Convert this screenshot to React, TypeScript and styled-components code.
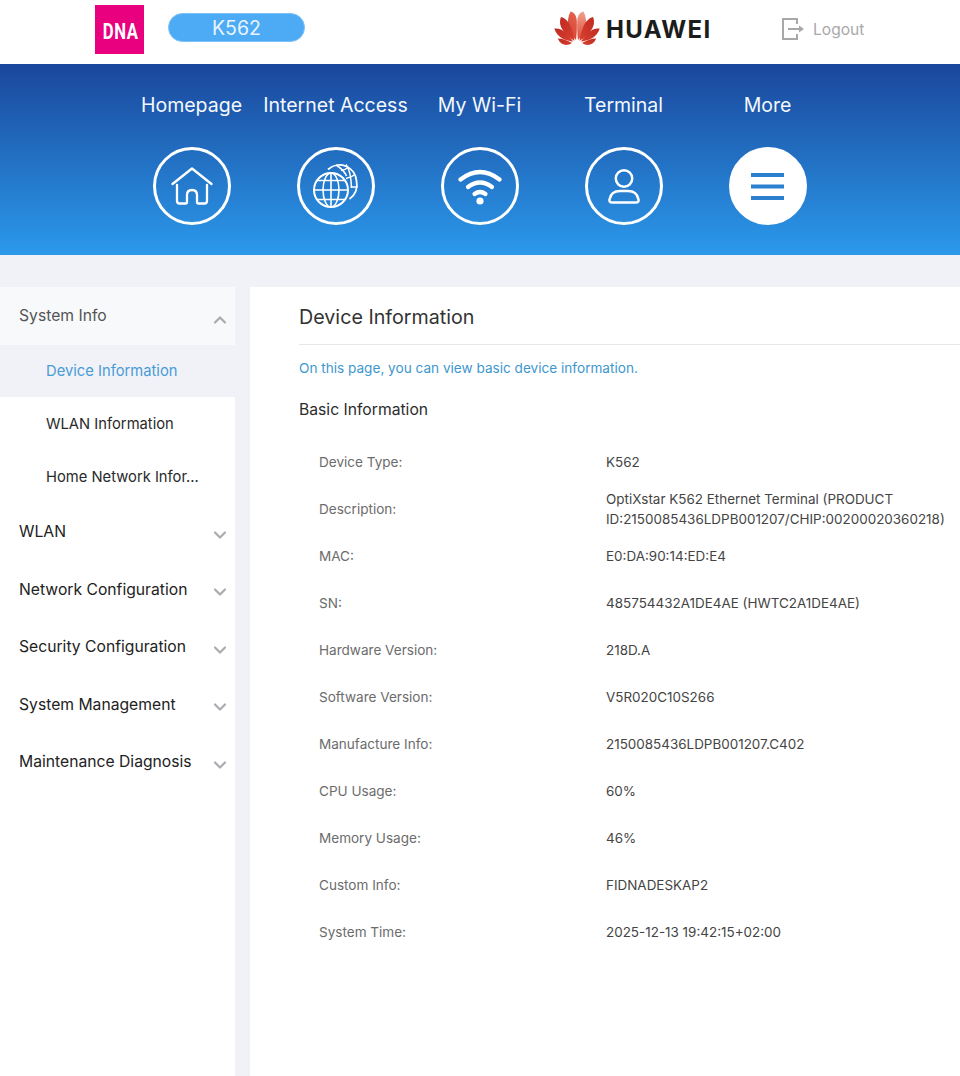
import React from "react";
import styled, { createGlobalStyle } from "styled-components";

const Global = createGlobalStyle`
  html, body { margin: 0; padding: 0; background: #f0f2f7; }
  body { font-family: Inter, "Noto Sans", "Liberation Sans", sans-serif; }
  * { box-sizing: border-box; }
`;

const Page = styled.div`
  width: 960px;
  height: 1076px;
  overflow: hidden;
  display: flex;
  flex-direction: column;
`;

const TopBar = styled.header`
  height: 64px;
  background: #fff;
  display: flex;
  align-items: flex-start;
  padding: 5px 0 0 95px;
  flex: none;
`;

const DnaLogo = styled.div`
  width: 49px;
  height: 49px;
  background: #e8007f;
  display: flex;
  align-items: center;
  justify-content: center;
  padding-top: 3px;
  padding-left: 2px;
`;

const DnaText = styled.span`
  display: block;
  color: #fff;
  font: 700 22px Roboto, "Liberation Sans", sans-serif;
  letter-spacing: 0.8px;
  transform: scaleX(0.76);
`;

const DevicePill = styled.div`
  width: 137px;
  height: 29px;
  margin: 8px 0 0 24px;
  border-radius: 15px;
  background: #4dabf5;
  border: 1px solid #7cc1f7;
  color: #e8f4fe;
  font-size: 19.5px;
  display: flex;
  align-items: center;
  justify-content: center;
`;

const Brand = styled.div`
  margin: 5px 0 0 249px;
  width: 160px;
  height: 38px;
  display: flex;
  align-items: center;
  gap: 6px;
`;

const BrandName = styled.span`
  font: 700 24px Inter, "Liberation Sans", sans-serif;
  color: #1c1c1c;
  letter-spacing: 1.35px;
`;

const LogoutBox = styled.div`
  display: flex;
  align-items: center;
  gap: 9px;
  margin: 12px 0 0 68px;
  height: 24px;
  color: #a9a9a9;
  font-size: 15.6px;
`;

const Banner = styled.nav`
  height: 191px;
  flex: none;
  background: linear-gradient(180deg, #1a479c 0%, #2b99ea 100%);
  display: flex;
  padding: 29px 0 0 119.5px;
`;

const NavItem = styled.div`
  width: 144px;
  display: flex;
  flex-direction: column;
  align-items: center;
  color: #f4f8fd;
  font-size: 19.5px;
`;

const NavLabel = styled.div`
  height: 24px;
  line-height: 24px;
  white-space: nowrap;
`;

const NavCircle = styled.div<{ $active?: boolean }>`
  width: 78px;
  height: 78px;
  margin-top: 30px;
  border-radius: 50%;
  border: 3px solid #fff;
  background: ${(p) => (p.$active ? "#fff" : "transparent")};
  display: flex;
  align-items: center;
  justify-content: center;
`;

const Body = styled.div`
  flex: 1;
  display: flex;
  padding-top: 32px;
  gap: 15px;
  min-height: 0;
`;

const Side = styled.aside`
  width: 235px;
  flex: none;
  background: #fff;
`;

const GroupHead = styled.div<{ $open?: boolean }>`
  height: ${(p) => (p.$open ? "58px" : "57.5px")};
  display: flex;
  align-items: center;
  justify-content: space-between;
  padding: 0 8px ${(p) => (p.$open ? "2px" : "0")} 19px;
  font-size: 15.7px;
  color: ${(p) => (p.$open ? "#555" : "#222")};
  background: ${(p) => (p.$open ? "#f8f9fb" : "#fff")};
`;

const SubItem = styled.div<{ $active?: boolean }>`
  height: ${(p) => (p.$active ? "52px" : "53px")};
  display: flex;
  align-items: center;
  padding-left: 46px;
  padding-bottom: ${(p) => (p.$active ? "1px" : "0")};
  font-size: 14.75px;
  color: ${(p) => (p.$active ? "#4a9bd6" : "#2a2a2a")};
  background: ${(p) => (p.$active ? "#f0f2f7" : "#fff")};
`;

const Main = styled.main`
  flex: 1;
  background: #fff;
  padding-left: 49px;
`;

const MainTitle = styled.h1`
  margin: 0;
  height: 58px;
  padding-top: 3px;
  display: flex;
  align-items: center;
  border-bottom: 1px solid #e4e6ea;
  font-size: 19.7px;
  font-weight: 400;
  color: #333;
`;

const Hint = styled.p`
  margin: 14px 0 0;
  font-size: 13.6px;
  line-height: 18px;
  color: #3d97cf;
`;

const SectionTitle = styled.h2`
  margin: 23px 0 0;
  font-size: 15.7px;
  line-height: 20px;
  font-weight: 400;
  color: #2c2c2c;
`;

const Rows = styled.div`
  margin-top: 18px;
  padding-left: 20px;
`;

const Row = styled.div`
  height: 47px;
  display: flex;
  align-items: center;
  line-height: 20px;
`;

const Key = styled.div`
  width: 287px;
  flex: none;
  font-size: 13.55px;
  color: #6c6c6c;
`;

const Val = styled.div`
  font-size: 13.45px;
  color: #444;
  white-space: pre-line;
`;

const Chevron = ({ up }: { up?: boolean }) => (
  <svg width="14" height="14" viewBox="0 0 14 14" fill="none" style={{ marginTop: up ? 9 : 6 }}>
    <path
      d={up ? "M2 9.5 L7 4.5 L12 9.5" : "M2 4.5 L7 9.5 L12 4.5"}
      stroke="#a9abae"
      strokeWidth="2.2"
      strokeLinecap="round"
      strokeLinejoin="round"
    />
  </svg>
);

const petalPaths = [
  "M22 29 C15 22 11 11 16.5 0.5 C20 1.5 22.5 4 22.8 10 C23 16 22.8 23 22 29 Z",
  "M20.5 30 C12 24 3 16 7 6 C11 7 14 10 16 14 C18 19 20 25 20.5 30 Z",
  "M19 30.5 C13 30 3 27 0.3 17.5 C5 17 9 19 12 22 C15 25 17.5 28 19 30.5 Z",
  "M18 32 C13 35.5 7 34.5 3.8 27.5 C8.5 27.5 13.5 29.5 18 32 Z",
];

const Petals = () => (
  <svg width="46" height="36" viewBox="0 0 46 36">
    <defs>
      <linearGradient id="petA" x1="0" y1="1" x2="0.3" y2="0">
        <stop offset="0" stopColor="#d63c2d" />
        <stop offset="1" stopColor="#e2604c" />
      </linearGradient>
      <linearGradient id="petR" x1="0" y1="1" x2="0" y2="0">
        <stop offset="0" stopColor="#dd4b39" />
        <stop offset="1" stopColor="#f0a08c" />
      </linearGradient>
      <linearGradient id="petB" x1="1" y1="1" x2="0" y2="0">
        <stop offset="0" stopColor="#d8402f" />
        <stop offset="1" stopColor="#bf2a22" />
      </linearGradient>
    </defs>
    {petalPaths.map((d, i) => (
      <path key={`l${i}`} d={d} fill={i === 0 ? "url(#petA)" : "url(#petB)"} />
    ))}
    <g transform="translate(46 0) scale(-1 1)">
      {petalPaths.map((d, i) => (
        <path key={`r${i}`} d={d} fill={i === 0 ? "url(#petR)" : "url(#petB)"} />
      ))}
    </g>
  </svg>
);

const LogoutIcon = () => (
  <svg width="22" height="22" viewBox="0 0 22 22" fill="none" stroke="#a8a8a8" strokeWidth="2">
    <path d="M15 6 V1 H1 V21 H15 V16" />
    <path d="M6 11 H18" />
    <path d="M17 7.5 L22 11 L17 14.5 Z" fill="#a8a8a8" stroke="none" />
  </svg>
);

const HomeIcon = () => (
  <svg width="42" height="38" viewBox="0 0 42 38" fill="none" stroke="#fff" strokeWidth="2.3" strokeLinecap="round" strokeLinejoin="round">
    <path d="M1.5 17 L21 1.5 L40.5 17" />
    <path d="M6 18 V34 Q6 36.5 8.5 36.5 H14.5 Q16 36.5 16 35 V28 Q16 23 21 23 Q26 23 26 28 V35 Q26 36.5 27.5 36.5 H33.5 Q36 36.5 36 34 V18" />
  </svg>
);

const GlobeIcon = () => (
  <svg width="46" height="46" viewBox="0 0 46 46" fill="none" stroke="#fff" strokeWidth="1.5">
    <path d="M15 6.5 A17 17 0 0 1 43.5 18 A17 17 0 0 1 36.5 36" strokeWidth="1.8" />
    <path d="M23 2 Q31 7 33.5 13 M33 1.5 Q38 8 38.5 25 M36 4 Q33 6.5 28 7.5 M42 11.5 Q39 14 33 15.5 M44.5 24 H37.5" />
    <circle cx="18" cy="27" r="17" strokeWidth="2" />
    <ellipse cx="18" cy="27" rx="8" ry="17" strokeWidth="1.6" />
    <path d="M18 10 V44 M1 27 H35 M4 17.5 H32 M4 36.5 H32" strokeWidth="1.6" />
  </svg>
);

const WifiIcon = () => (
  <svg width="44" height="37" viewBox="0 0 44 37" fill="none" stroke="#fff" strokeWidth="4.2" strokeLinecap="round">
    <path d="M2.5 11.5 Q22 -3.5 41.5 11.5" />
    <path d="M10 19 Q22 10 34 19" />
    <path d="M16.5 26 Q22 22 27.5 26" />
    <circle cx="22" cy="33" r="3.6" fill="#fff" stroke="none" />
  </svg>
);

const UserIcon = () => (
  <svg width="32" height="35" viewBox="0 0 32 35" fill="none" stroke="#fff" strokeWidth="2.5">
    <circle cx="16" cy="9.5" r="8.2" />
    <path d="M4 33.5 H28 Q31 33.5 30.5 30.5 Q29 22 20 22 H12 Q3 22 1.5 30.5 Q1 33.5 4 33.5 Z" strokeLinejoin="round" />
  </svg>
);

const MenuIcon = () => (
  <svg width="33" height="27" viewBox="0 0 33 27" fill="#2a80cf">
    <rect y="0" width="33" height="4" />
    <rect y="11.5" width="33" height="4" />
    <rect y="23" width="33" height="4" />
  </svg>
);

const navItems = [
  { label: "Homepage", icon: <HomeIcon /> },
  { label: "Internet Access", icon: <GlobeIcon /> },
  { label: "My Wi-Fi", icon: <WifiIcon /> },
  { label: "Terminal", icon: <UserIcon /> },
  { label: "More", icon: <MenuIcon />, active: true },
];

const closedGroups = ["WLAN", "Network Configuration", "Security Configuration", "System Management", "Maintenance Diagnosis"];

const rows: [string, string][] = [
  ["Device Type:", "K562"],
  ["Description:", "OptiXstar K562 Ethernet Terminal (PRODUCT\nID:2150085436LDPB001207/CHIP:00200020360218)"],
  ["MAC:", "E0:DA:90:14:ED:E4"],
  ["SN:", "485754432A1DE4AE (HWTC2A1DE4AE)"],
  ["Hardware Version:", "218D.A"],
  ["Software Version:", "V5R020C10S266"],
  ["Manufacture Info:", "2150085436LDPB001207.C402"],
  ["CPU Usage:", "60%"],
  ["Memory Usage:", "46%"],
  ["Custom Info:", "FIDNADESKAP2"],
  ["System Time:", "2025-12-13 19:42:15+02:00"],
];

export default function App() {
  return (
    <Page>
      <Global />
      <TopBar>
        <DnaLogo>
          <DnaText>DNA</DnaText>
        </DnaLogo>
        <DevicePill>K562</DevicePill>
        <Brand>
          <Petals />
          <BrandName>HUAWEI</BrandName>
        </Brand>
        <LogoutBox>
          <LogoutIcon />
          Logout
        </LogoutBox>
      </TopBar>
      <Banner>
        {navItems.map((n) => (
          <NavItem key={n.label}>
            <NavLabel>{n.label}</NavLabel>
            <NavCircle $active={n.active}>{n.icon}</NavCircle>
          </NavItem>
        ))}
      </Banner>
      <Body>
        <Side>
          <GroupHead $open>
            System Info
            <Chevron up />
          </GroupHead>
          <SubItem $active>Device Information</SubItem>
          <SubItem>WLAN Information</SubItem>
          <SubItem>Home Network Infor...</SubItem>
          {closedGroups.map((g) => (
            <GroupHead key={g}>
              {g}
              <Chevron />
            </GroupHead>
          ))}
        </Side>
        <Main>
          <MainTitle>Device Information</MainTitle>
          <Hint>On this page, you can view basic device information.</Hint>
          <SectionTitle>Basic Information</SectionTitle>
          <Rows>
            {rows.map(([k, v]) => (
              <Row key={k}>
                <Key>{k}</Key>
                <Val>{v}</Val>
              </Row>
            ))}
          </Rows>
        </Main>
      </Body>
    </Page>
  );
}
